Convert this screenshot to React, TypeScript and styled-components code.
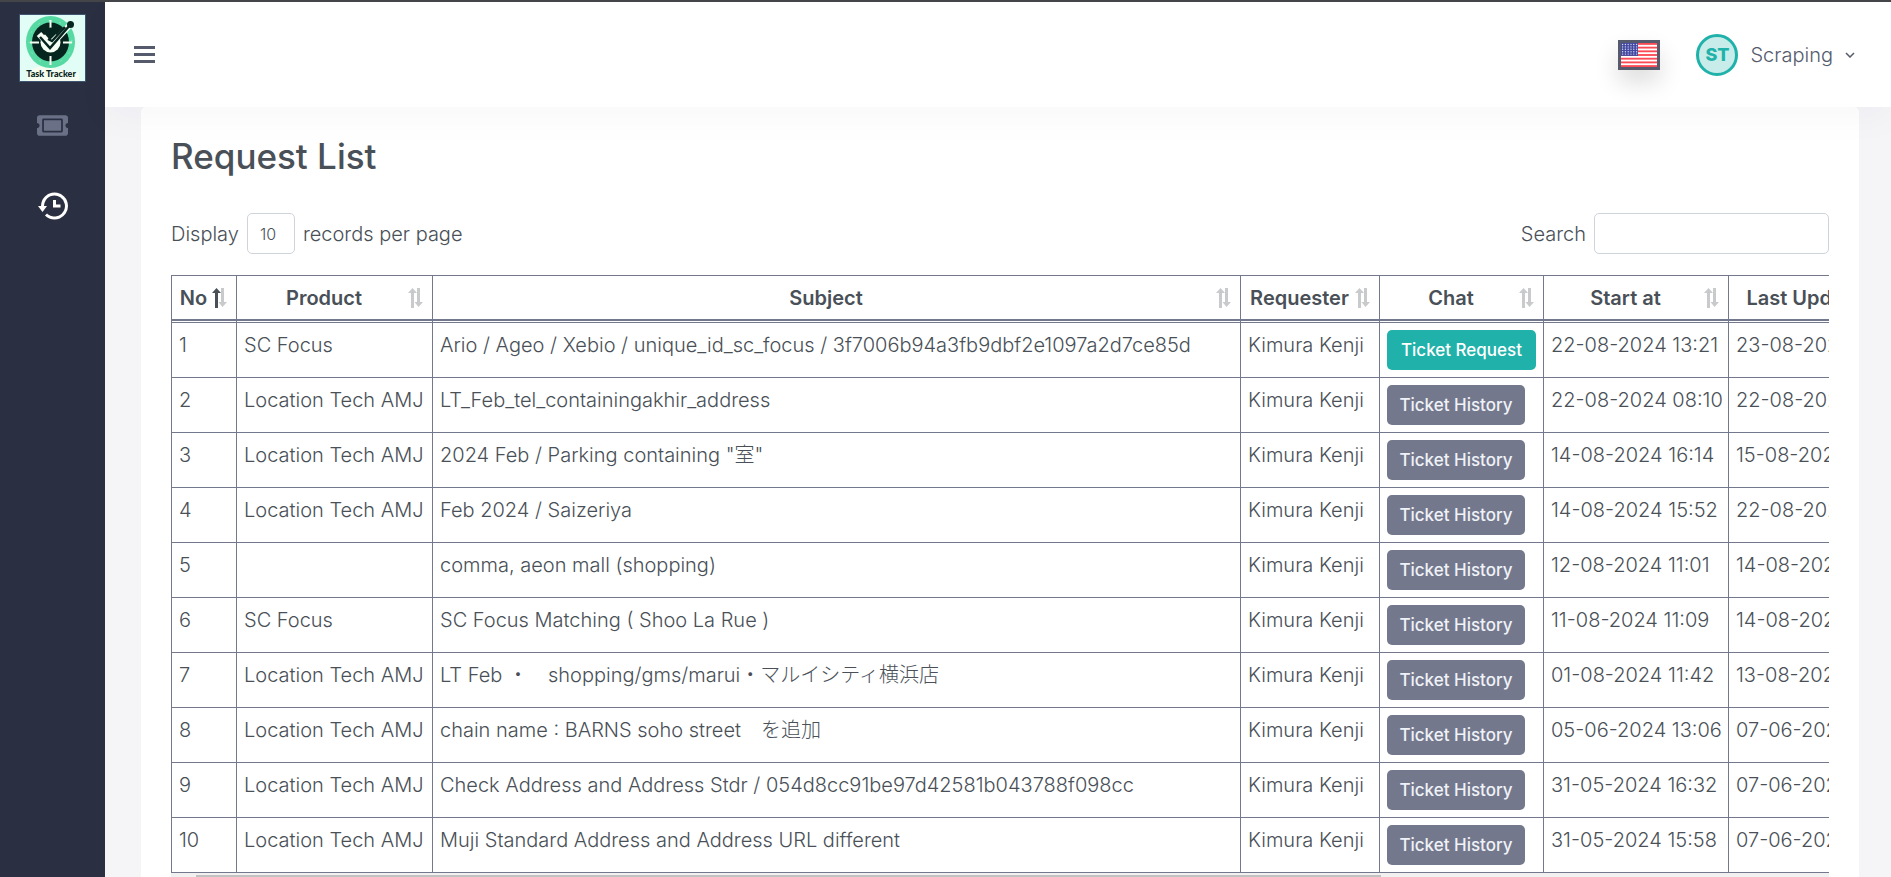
import React from "react";
import styled, { createGlobalStyle } from "styled-components";
import { FaTicketAlt } from "react-icons/fa";
import { BiHistory } from "react-icons/bi";

const line = "#74788d";
const ink = "#495057";
const teal = "#20b2aa";

const GlobalStyle = createGlobalStyle`
  *, *::before, *::after { box-sizing: border-box; }
  body {
    margin: 0;
    background: #f5f5f8;
    color: ${ink};
    font-family: Inter, "Noto Sans CJK JP", sans-serif;
    font-size: 20px;
    font-weight: 300;
    line-height: 30px;
  }
  button, input, select { font: inherit; color: inherit; }
`;

const Page = styled.div`
  display: grid;
  grid-template-columns: 105px minmax(0, 1fr);
  height: 100vh;
  overflow: hidden;
  border-top: 2px solid #434549;
`;

const Sidebar = styled.nav`
  display: flex;
  flex-direction: column;
  align-items: center;
  padding-top: 12px;
  background: #2a3042;
`;

const LogoLink = styled.a`
  display: block;
  width: 67px;
  height: 68px;
  margin-bottom: 29px;
  svg { display: block; }
`;

const SideLink = styled.a<{ $active?: boolean }>`
  display: flex;
  align-items: center;
  justify-content: center;
  width: 48px;
  height: 28px;
  margin-bottom: 53px;
  color: ${(p) => (p.$active ? "#fff" : "#6a7187")};
`;

const Main = styled.div`
  display: flex;
  flex-direction: column;
  min-width: 0;
`;

const TopBar = styled.header`
  display: flex;
  flex: none;
  align-items: center;
  justify-content: space-between;
  position: relative;
  z-index: 1;
  height: 105px;
  padding: 0 36px 0 29px;
  background: #fff;
  box-shadow: 0 12px 34px rgba(18, 38, 63, 0.03);
`;

const PlainButton = styled.button`
  display: flex;
  align-items: center;
  padding: 0;
  border: 0;
  background: none;
  cursor: pointer;
`;

const Bars = styled.span`
  display: grid;
  gap: 4px;
  width: 21px;
  i { height: 3px; background: #555b6d; }
`;

const UserArea = styled.div`
  display: flex;
  align-items: center;
  gap: 36px;
`;

const FlagButton = styled(PlainButton)`
  border: 3px solid #555b6d;
  box-shadow: 0 12px 24px rgba(0, 0, 0, 0.14);
  svg { display: block; }
`;

const UserButton = styled(PlainButton)`
  gap: 12px;
  color: #555b6d;
  svg { display: block; }
`;

const Avatar = styled.span`
  display: flex;
  align-items: center;
  justify-content: center;
  width: 42px;
  height: 42px;
  border: 3px solid ${teal};
  border-radius: 50%;
  background: #c7ece9;
  color: ${teal};
  font-size: 18px;
  font-weight: 800;
`;

const Card = styled.main`
  flex: 1;
  min-height: 0;
  margin: 0 32px 0 36px;
  padding: 28px 30px 0 30px;
  background: #fff;
  border-radius: 5px 5px 0 0;
`;

const Title = styled.h1`
  margin: 0 0 36px;
  font-size: 35px;
  font-weight: 500;
  line-height: 42px;
`;

const Toolbar = styled.div`
  display: flex;
  align-items: center;
  justify-content: space-between;
  margin-bottom: 21px;
`;

const Field = styled.label`
  display: flex;
  align-items: center;
  gap: 8px;
`;

const fieldBox = `
  height: 41px;
  border: 1px solid #ced4da;
  border-radius: 5px;
  background: #fff;
  outline: none;
`;

const PageSize = styled.select`
  ${fieldBox}
  width: 48px;
  padding: 0 12px;
  appearance: none;
  font-size: 16px;
`;

const SearchBox = styled.input`
  ${fieldBox}
  width: 235px;
  padding: 0 12px;
`;

const TableScroller = styled.div`
  overflow: hidden;
`;

const Table = styled.table`
  width: 1743px;
  min-width: 100%;
  table-layout: fixed;
  border-collapse: separate;
  border-spacing: 0;
  border-left: 1px solid ${line};
  white-space: nowrap;
`;

const HeadCell = styled.th`
  height: 48px;
  padding: 0 9px 3px 7px;
  border: solid ${line};
  border-width: 1px 1px 1px 0;
  background: linear-gradient(${line}, ${line}) 0 calc(100% - 1px) / 100% 2px no-repeat;
  font-weight: 600;
`;

const SortButton = styled(PlainButton)`
  width: 100%;
  gap: 4px;
  span { flex: 1; text-align: center; }
  svg { flex: none; }
`;

const Cell = styled.td`
  height: 55px;
  padding: 7px;
  border: solid ${line};
  border-width: 0 1px 1px 0;
  vertical-align: top;
`;

const ChatButton = styled.button<{ $request?: boolean }>`
  display: block;
  width: ${(p) => (p.$request ? "149px" : "138px")};
  height: 40px;
  padding: 0;
  border: 0;
  border-radius: 5px;
  background: ${(p) => (p.$request ? teal : line)};
  color: ${(p) => (p.$request ? "#fff" : "#eff2f7")};
  font-size: 17px;
  font-weight: 500;
  cursor: pointer;
`;

const ScrollTrack = styled.div`
  height: 17px;
  padding: 2px 448px 2px 25px;
  background: #f1f1f1;
`;

const ScrollThumb = styled.div`
  height: 13px;
  background: #c1c1c1;
`;

function Logo() {
  return (
    <svg width="67" height="68" viewBox="0 0 67 68" role="img" aria-label="Task Tracker">
      <rect width="67" height="68" fill="#3f5470" />
      <rect x="1" y="1" width="65" height="66" fill="#e1fdf5" />
      <path d="M8 58q10-8 25-4t27 4v9H8z" fill="#f4fdf0" />
      <ellipse cx="31.500" cy="28" rx="24.500" ry="26" fill="#56d9a2" />
      <circle cx="31.500" cy="28" r="21.500" fill="none" stroke="#b5f2d6" strokeDasharray="1 10" />
      <ellipse cx="31.500" cy="28" rx="18.500" ry="19.500" fill="#06251f" />
      <path d="M31.500 6v9M31.500 42v9M11 28.500h9M44 28.500h9" stroke="#f5fff4" strokeWidth="2" />
      <circle cx="31.500" cy="28.500" r="10" fill="#f5fff4" />
      <path d="M23 17q9-7 17 0l-9 9z" fill="#06251f" />
      <path d="M20 20l11 12 19-20" fill="none" stroke="#f5fff4" strokeWidth="6" />
      <path d="M21 23l10 11 20-23M29 25l4 2 13-14" fill="none" stroke="#06251f" strokeWidth="2.500" />
      <circle cx="51.500" cy="10.500" r="3.500" fill="#06251f" />
      <text x="32" y="63" textAnchor="middle" fontFamily="Lato, sans-serif" fontSize="9" fontWeight="900" fill="#06251f">
        Task Tracker
      </text>
    </svg>
  );
}

function Flag() {
  const stars: React.ReactNode[] = [];
  for (let r = 0; r < 5; r++)
    for (let c = 0; c < 6; c++)
      stars.push(<circle key={`${r}-${c}`} cx={1.6 + c * 2.8} cy={1.5 + r * 2.4} r="0.7" fill="#d4d6f2" />);
  return (
    <svg width="36" height="24" viewBox="0 0 36 24">
      <rect width="36" height="24" fill="#fff" />
      {[0, 1, 2, 3, 4, 5, 6].map((i) => (
        <rect key={i} y={i * 3.69} width="36" height="1.85" fill="#fb4a55" />
      ))}
      <rect width="17" height="12.9" fill="#4448a0" />
      {stars}
    </svg>
  );
}

function SortIcon({ sorted }: { sorted?: boolean }) {
  return (
    <svg width="15" height="20" viewBox="0 0 15 20" aria-hidden="true">
      <path d="M4.500 0L9 5H6v15H3V5H0z" fill={sorted ? ink : "#c8cacc"} />
      <path d="M9 0h3v14h3l-4.500 5L6.500 14H9z" fill="#c8cacc" />
    </svg>
  );
}

const columns: [string, number][] = [
  ["No", 65],
  ["Product", 196],
  ["Subject", 808],
  ["Requester", 139],
  ["Chat", 164],
  ["Start at", 185],
  ["Last Updated", 185],
];

const tech = "Location Tech AMJ";
const rows: [string, string, string, string][] = [
  ["SC Focus", "Ario / Ageo / Xebio / unique_id_sc_focus / 3f7006b94a3fb9dbf2e1097a2d7ce85d", "22-08-2024 13:21", "23-08-2024"],
  [tech, "LT_Feb_tel_containingakhir_address", "22-08-2024 08:10", "22-08-2024"],
  [tech, "2024 Feb / Parking containing \"室\"", "14-08-2024 16:14", "15-08-2024"],
  [tech, "Feb 2024 / Saizeriya", "14-08-2024 15:52", "22-08-2024"],
  ["", "comma, aeon mall (shopping)", "12-08-2024 11:01", "14-08-2024"],
  ["SC Focus", "SC Focus Matching ( Shoo La Rue )", "11-08-2024 11:09", "14-08-2024"],
  [tech, "LT Feb ・　shopping/gms/marui・マルイシティ横浜店", "01-08-2024 11:42", "13-08-2024"],
  [tech, "chain name : BARNS soho street　を追加", "05-06-2024 13:06", "07-06-2024"],
  [tech, "Check Address and Address Stdr / 054d8cc91be97d42581b043788f098cc", "31-05-2024 16:32", "07-06-2024"],
  [tech, "Muji Standard Address and Address URL different", "31-05-2024 15:58", "07-06-2024"],
];

export default function App() {
  return (
    <Page>
      <GlobalStyle />
      <Sidebar>
        <LogoLink href="#home"><Logo /></LogoLink>
        <SideLink href="#tickets" aria-label="Tickets"><FaTicketAlt size={31} /></SideLink>
        <SideLink href="#history" aria-label="History" $active><BiHistory size={36} /></SideLink>
      </Sidebar>
      <Main>
        <TopBar>
          <PlainButton aria-label="Toggle menu">
            <Bars><i /><i /><i /></Bars>
          </PlainButton>
          <UserArea>
            <FlagButton aria-label="Language: English"><Flag /></FlagButton>
            <UserButton>
              <Avatar>ST</Avatar>
              <span>Scraping</span>
              <svg width="10" height="6" viewBox="0 0 10 6" aria-hidden="true">
                <path d="M1 1l4 4 4-4" fill="none" stroke="currentColor" strokeWidth="1.500" />
              </svg>
            </UserButton>
          </UserArea>
        </TopBar>
        <Card>
          <Title>Request List</Title>
          <Toolbar>
            <Field>
              Display
              <PageSize defaultValue="10"><option>10</option><option>25</option><option>50</option></PageSize>
              records per page
            </Field>
            <Field>
              Search
              <SearchBox type="search" />
            </Field>
          </Toolbar>
          <TableScroller>
            <Table>
              <colgroup>
                {columns.map(([name, width]) => <col key={name} width={width} />)}
              </colgroup>
              <thead>
                <tr>
                  {columns.map(([name]) => (
                    <HeadCell key={name} scope="col">
                      <SortButton><span>{name}</span><SortIcon sorted={name === "No"} /></SortButton>
                    </HeadCell>
                  ))}
                </tr>
              </thead>
              <tbody>
                {rows.map(([product, subject, start, updated], i) => (
                  <tr key={subject}>
                    <Cell>{i + 1}</Cell>
                    <Cell>{product}</Cell>
                    <Cell>{subject}</Cell>
                    <Cell>Kimura Kenji</Cell>
                    <Cell>
                      <ChatButton $request={i === 0}>{i === 0 ? "Ticket Request" : "Ticket History"}</ChatButton>
                    </Cell>
                    <Cell>{start}</Cell>
                    <Cell>{updated}</Cell>
                  </tr>
                ))}
              </tbody>
            </Table>
          </TableScroller>
          <ScrollTrack><ScrollThumb /></ScrollTrack>
        </Card>
      </Main>
    </Page>
  );
}
